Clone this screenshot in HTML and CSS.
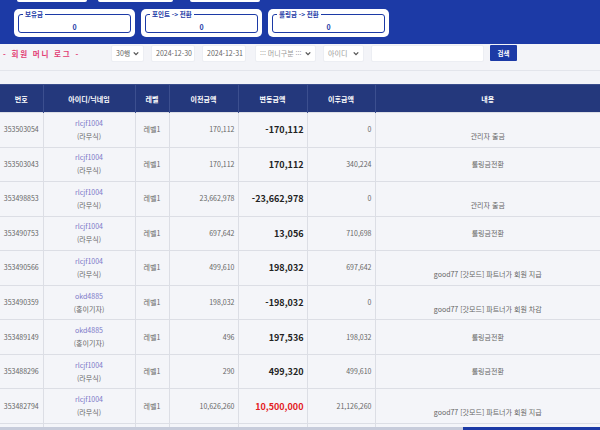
FILE: index.html
```html
<!DOCTYPE html>
<html lang="ko">
<head>
<meta charset="utf-8">
<title>회원 머니 로그</title>
<link rel="stylesheet" href="styles.css">
</head>
<body>
<header class="top">
  <div class="stubs"><span class="stub s1"></span><span class="stub s2"></span><span class="stub s3"></span></div>
  <div class="cards">
    <div class="card"><fieldset class="frame"><legend>보유금</legend><div class="val">0</div></fieldset></div>
    <div class="card"><fieldset class="frame"><legend>포인트 -&gt; 전환</legend><div class="val">0</div></fieldset></div>
    <div class="card"><fieldset class="frame"><legend>롤링금 -&gt; 전환</legend><div class="val">0</div></fieldset></div>
  </div>
</header>

<form class="search">
  <h2 class="title">- 회원 머니 로그 -</h2>
  <div class="ctl sel w-rows">30행<svg class="chev" viewBox="0 0 8 6"><path d="M1 1.5 4 4.5 7 1.5" /></svg></div>
  <div class="ctl w-date">2024-12-30</div>
  <div class="ctl w-date">2024-12-31</div>
  <div class="ctl sel w-kind gap9">::: 머니구분 :::<svg class="chev" viewBox="0 0 8 6"><path d="M1 1.5 4 4.5 7 1.5" /></svg></div>
  <div class="ctl sel w-id">아이디<svg class="chev" viewBox="0 0 8 6"><path d="M1 1.5 4 4.5 7 1.5" /></svg></div>
  <div class="ctl w-text"></div>
  <button type="button" class="btn">검색</button>
</form>
<div class="sep"></div>

<table class="log">
  <colgroup>
    <col class="c1"><col class="c2"><col class="c3"><col class="c4"><col class="c5"><col class="c6"><col class="c7">
  </colgroup>
  <thead>
    <tr><th>번호</th><th>아이디/닉네임</th><th>레벨</th><th>이전금액</th><th>변동금액</th><th>이후금액</th><th>내용</th></tr>
  </thead>
  <tbody>
    <tr><td class="no">353503054</td><td class="uid"><a>rlcjf1004</a><br>(라무식)</td><td>레벨1</td><td class="num">170,112</td><td class="amt">-170,112</td><td class="num">0</td><td class="memo"><br>관리자 출금</td></tr>
    <tr><td class="no">353503043</td><td class="uid"><a>rlcjf1004</a><br>(라무식)</td><td>레벨1</td><td class="num">170,112</td><td class="amt">170,112</td><td class="num">340,224</td><td class="memo">롤링금전환</td></tr>
    <tr><td class="no">353498853</td><td class="uid"><a>rlcjf1004</a><br>(라무식)</td><td>레벨1</td><td class="num">23,662,978</td><td class="amt">-23,662,978</td><td class="num">0</td><td class="memo"><br>관리자 출금</td></tr>
    <tr><td class="no">353490753</td><td class="uid"><a>rlcjf1004</a><br>(라무식)</td><td>레벨1</td><td class="num">697,642</td><td class="amt">13,056</td><td class="num">710,698</td><td class="memo">롤링금전환</td></tr>
    <tr><td class="no">353490566</td><td class="uid"><a>rlcjf1004</a><br>(라무식)</td><td>레벨1</td><td class="num">499,610</td><td class="amt">198,032</td><td class="num">697,642</td><td class="memo"><br>good77 [갓모드] 파트너가 회원 지급</td></tr>
    <tr><td class="no">353490359</td><td class="uid"><a>okd4885</a><br>(홍이기자)</td><td>레벨1</td><td class="num">198,032</td><td class="amt">-198,032</td><td class="num">0</td><td class="memo"><br>good77 [갓모드] 파트너가 회원 차감</td></tr>
    <tr><td class="no">353489149</td><td class="uid"><a>okd4885</a><br>(홍이기자)</td><td>레벨1</td><td class="num">496</td><td class="amt">197,536</td><td class="num">198,032</td><td class="memo">롤링금전환</td></tr>
    <tr><td class="no">353488296</td><td class="uid"><a>rlcjf1004</a><br>(라무식)</td><td>레벨1</td><td class="num">290</td><td class="amt">499,320</td><td class="num">499,610</td><td class="memo">롤링금전환</td></tr>
    <tr><td class="no">353482794</td><td class="uid"><a>rlcjf1004</a><br>(라무식)</td><td>레벨1</td><td class="num">10,626,260</td><td class="amt red">10,500,000</td><td class="num">21,126,260</td><td class="memo"><br>good77 [갓모드] 파트너가 회원 지급</td></tr>
    <tr class="partial"><td></td><td></td><td></td><td></td><td></td><td></td><td></td></tr>
  </tbody>
</table>

<div class="scrollbar"><span class="thumb"></span></div>
</body>
</html>
```

FILE: styles.css
```css
* { box-sizing: border-box; }
html, body { margin: 0; padding: 0; }
body {
  background: #f3f4f8;
  font-family: "Noto Sans CJK KR", "Noto Sans", sans-serif;
  color: #555;
  width: 600px;
  height: 430px;
  overflow: hidden;
}

/* top blue band */
.top {
  background: #1c3aa6;
  height: 44px;
  padding: 0 0 0 14px;
}
.stubs { display: flex; height: 2px; }
.stub { display: block; height: 2px; background: #fff; border-radius: 0 0 2px 2px; }
.s1 { width: 70px; margin-left: 3px; }
.s2 { width: 75px; margin-left: 11px; }
.s3 { width: 70px; margin-left: 17px; }

.cards { display: flex; gap: 6px; margin-top: 7px; }
.card {
  width: 121px;
  height: 28px;
  background: #fff;
  border-radius: 5px;
  padding: 1px 4px 3px 4px;
}
.frame {
  margin: 0;
  padding: 0;
  min-width: 0;
  height: 23px;
  border: 1.5px solid #1c3aa6;
  border-radius: 3px;
}
.frame legend {
  margin-left: 4px;
  padding: 0 2px;
  font-size: 6.5px;
  line-height: 8px;
  font-weight: 700;
  color: #1c3aa6;
}
.val {
  text-align: center;
  font-size: 7px;
  line-height: 10px;
  font-weight: 700;
  color: #1c3aa6;
  padding-top: 4px;
}

/* search row */
.search {
  display: flex;
  align-items: center;
  gap: 7px;
  height: 17px;
  margin: 1px 0 0 0;
  padding-left: 3px;
}
.title {
  margin: 0;
  width: 101px;
  font-size: 7.5px;
  font-weight: 700;
  letter-spacing: 1.8px;
  color: #e23a72;
  white-space: nowrap;
}
.ctl {
  height: 17px;
  background: #fff;
  border: 1px solid #eceef3;
  border-radius: 2px;
  font-size: 7px;
  line-height: 15px;
  color: #666;
  padding: 0 4px;
  white-space: nowrap;
  display: flex;
  align-items: center;
}
.sel { justify-content: space-between; }
.chev { width: 6px; height: 5px; fill: none; stroke: #555; stroke-width: 1.8; }
.w-rows { width: 33px; }
.w-date { width: 44px; }
.w-kind { width: 61px; color: #999; }
.gap9 { margin-left: 2px; }
.w-id { width: 41px; color: #999; }
.w-text { width: 113px; }
.btn {
  margin-left: -1px;
  width: 27px;
  height: 16px;
  border: 0;
  border-radius: 1px;
  background: #1c3aa6;
  color: #fff;
  font-family: inherit;
  font-size: 6.5px;
  font-weight: 700;
  padding: 0;
  align-self: flex-start;
}

.sep { height: 1px; background: #e3e5eb; margin-top: 8px; }

/* table */
.log {
  margin-top: 13px;
  width: 600px;
  border-collapse: collapse;
  table-layout: fixed;
  font-size: 7px;
}
.c1 { width: 43px; }
.c2 { width: 92px; }
.c3 { width: 34px; }
.c4 { width: 69px; }
.c5 { width: 69px; }
.c6 { width: 68px; }
.c7 { width: 225px; }

.log th {
  background: #24387c;
  color: #fff;
  font-weight: 700;
  height: 28px;
  padding: 0;
  border-left: 1px solid #3c4f8f;
  border-top: 1px solid #3a4d8c;
  text-align: center;
}
.log th:first-child { border-left: 0; }

.log td {
  height: 34.56px;
  padding: 0 3px;
  background: #f4f5f9;
  border: 1px solid #dcdee5;
  text-align: center;
  line-height: 13px;
  color: #666;
  vertical-align: middle;
}
.log td:first-child { border-left: 0; }
.log td:last-child { border-right: 0; }
.log td.no { padding: 0; }
.log td.uid a { color: #7c78c8; }
.log td.num { text-align: right; }
.log td.amt {
  text-align: right;
  font-size: 9px;
  font-weight: 700;
  color: #222;
}
.log td.amt.red { color: #e3201e; }

/* bottom overlay scrollbar */
.scrollbar {
  position: fixed;
  left: 0;
  right: 0;
  bottom: 0;
  height: 3px;
  background: #c7ccdb;
  display: flex;
  justify-content: flex-end;
}
.thumb { width: 137px; background: #1c3aa6; }
```
